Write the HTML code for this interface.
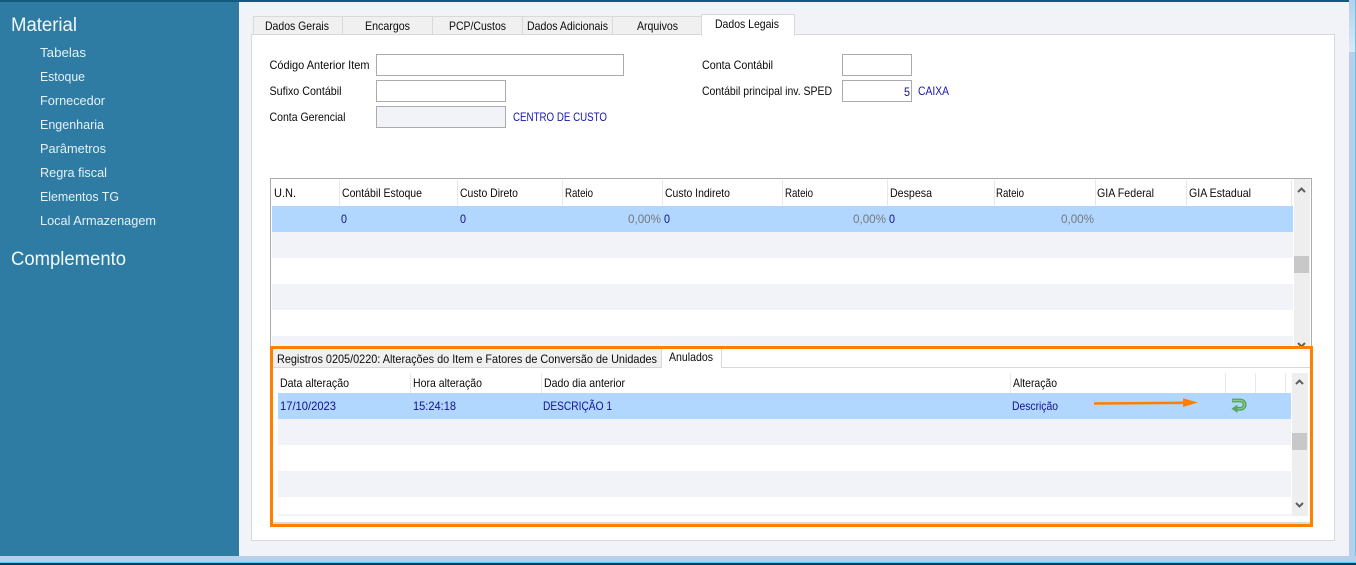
<!DOCTYPE html>
<html><head><meta charset="utf-8"><style>
html,body{margin:0;padding:0;width:1356px;height:565px;overflow:hidden;background:#f1f3f8}
svg{display:block}
text{font-family:"Liberation Sans",sans-serif;font-size:12px;fill:#0a0a0a;}
.s{fill:#e6f1f7;font-size:13px}
.h{fill:#f2f8fb;font-size:19px}
.d{fill:#10108c}
.g{fill:#777}
.l{fill:#1414b4}
</style></head><body>
<svg width="1356" height="565" viewBox="0 0 1356 565" xmlns="http://www.w3.org/2000/svg" shape-rendering="crispEdges">
<defs><linearGradient id="st" x1="0" y1="0" x2="0" y2="1"><stop offset="0" stop-color="#b7d0ea"/><stop offset="1" stop-color="#dbe8f5"/></linearGradient></defs>
<rect width="1356" height="565" fill="#f1f3f8"/>
<!-- frame -->
<rect x="1349" y="0" width="7" height="556" fill="#b7cfe9"/>
<rect x="1349" y="2" width="6" height="50" fill="url(#st)"/>
<rect x="1355" y="0" width="1" height="563" fill="#5cc8ec"/>
<rect x="0" y="556" width="1356" height="6" fill="#b7cfe9"/>
<rect x="0" y="562" width="1356" height="1" fill="#45cfe8"/>
<rect x="0" y="563" width="1356" height="2" fill="#10384a"/>
<rect x="0" y="0" width="1349" height="2" fill="#14597e"/>
<!-- sidebar -->
<rect x="0" y="2" width="239" height="554" fill="#2e7ca3"/>
<text class="h" x="11" y="31" textLength="66" lengthAdjust="spacingAndGlyphs">Material</text>
<text class="s" x="40" y="57" textLength="46" lengthAdjust="spacingAndGlyphs">Tabelas</text>
<text class="s" x="40" y="81" textLength="45" lengthAdjust="spacingAndGlyphs">Estoque</text>
<text class="s" x="40" y="105" textLength="65" lengthAdjust="spacingAndGlyphs">Fornecedor</text>
<text class="s" x="40" y="129" textLength="64" lengthAdjust="spacingAndGlyphs">Engenharia</text>
<text class="s" x="40" y="153" textLength="66" lengthAdjust="spacingAndGlyphs">Parâmetros</text>
<text class="s" x="40" y="177" textLength="67" lengthAdjust="spacingAndGlyphs">Regra fiscal</text>
<text class="s" x="40" y="201" textLength="79" lengthAdjust="spacingAndGlyphs">Elementos TG</text>
<text class="s" x="40" y="225" textLength="116" lengthAdjust="spacingAndGlyphs">Local Armazenagem</text>
<text class="h" x="11" y="265" textLength="115" lengthAdjust="spacingAndGlyphs">Complemento</text>
<!-- main panel -->
<rect x="251.500" y="34.500" width="1083" height="506" fill="#fff" stroke="#d9d9d9"/>
<!-- tabs -->
<g fill="#f0f0f0" stroke="#d9d9d9">
<rect x="253.500" y="16.500" width="89" height="18"/>
<rect x="342.500" y="16.500" width="90" height="18"/>
<rect x="432.500" y="16.500" width="90" height="18"/>
<rect x="522.500" y="16.500" width="90" height="18"/>
<rect x="612.500" y="16.500" width="89" height="18"/>
</g>
<rect x="701.500" y="14.500" width="93" height="21" fill="#fff" stroke="#d9d9d9"/>
<rect x="702" y="33" width="92" height="3" fill="#fff"/>
<text x="265" y="30" textLength="64" lengthAdjust="spacingAndGlyphs">Dados Gerais</text>
<text x="365" y="30" textLength="45" lengthAdjust="spacingAndGlyphs">Encargos</text>
<text x="449" y="30" textLength="57" lengthAdjust="spacingAndGlyphs">PCP/Custos</text>
<text x="527" y="30" textLength="81" lengthAdjust="spacingAndGlyphs">Dados Adicionais</text>
<text x="637" y="30" textLength="41" lengthAdjust="spacingAndGlyphs">Arquivos</text>
<text x="715" y="28" textLength="64" lengthAdjust="spacingAndGlyphs">Dados Legais</text>
<!-- form -->
<text x="269.500" y="69" textLength="100" lengthAdjust="spacingAndGlyphs">Código Anterior Item</text>
<text x="269.500" y="95" textLength="72" lengthAdjust="spacingAndGlyphs">Sufixo Contábil</text>
<text x="269.500" y="121" textLength="76" lengthAdjust="spacingAndGlyphs">Conta Gerencial</text>
<g stroke="#ababab">
<rect x="376.500" y="54.500" width="247" height="21" fill="#fff"/>
<rect x="376.500" y="80.500" width="129" height="21" fill="#fff"/>
<rect x="376.500" y="106.500" width="129" height="21" fill="#f1f3f8"/>
<rect x="842.500" y="54.500" width="69" height="21" fill="#fff"/>
<rect x="842.500" y="80.500" width="69" height="21" fill="#fff"/>
</g>
<text class="l" x="513" y="121" textLength="94" lengthAdjust="spacingAndGlyphs">CENTRO DE CUSTO</text>
<text x="702" y="69" textLength="71" lengthAdjust="spacingAndGlyphs">Conta Contábil</text>
<text x="702" y="95" textLength="130" lengthAdjust="spacingAndGlyphs">Contábil principal inv. SPED</text>
<text class="d" x="904" y="96" textLength="6" lengthAdjust="spacingAndGlyphs">5</text>
<text class="l" x="918" y="95" textLength="31" lengthAdjust="spacingAndGlyphs">CAIXA</text>
<!-- grid 1 -->
<rect x="270.500" y="178.500" width="1041" height="172" fill="#fff" stroke="#ababab"/>
<rect x="272" y="206" width="1021" height="26" fill="#b2d7ff"/>
<rect x="272" y="232" width="1021" height="26" fill="#f1f3f8"/>
<rect x="272" y="284" width="1021" height="26" fill="#f1f3f8"/>
<rect x="272" y="336" width="1021" height="11" fill="#f1f3f8"/>
<g fill="#e8e8e8">
<rect x="339" y="180" width="1" height="26"/><rect x="457" y="180" width="1" height="26"/>
<rect x="562" y="180" width="1" height="26"/><rect x="662" y="180" width="1" height="26"/>
<rect x="782" y="180" width="1" height="26"/><rect x="887" y="180" width="1" height="26"/>
<rect x="994" y="180" width="1" height="26"/><rect x="1095" y="180" width="1" height="26"/>
<rect x="1186" y="180" width="1" height="26"/><rect x="1291" y="180" width="1" height="26"/>
</g>
<rect x="1294" y="179" width="16" height="168" fill="#eee"/>
<rect x="1294" y="256" width="15" height="17" fill="#c8c8c8"/>
<g fill="none" stroke="#5f5f5f" stroke-width="2" shape-rendering="auto">
<path d="M1298 192l3.500-3.500 3.500 3.500"/>
<path d="M1298 343l3.500 3.500 3.500-3.500"/>
</g>
<text x="274" y="197" textLength="22" lengthAdjust="spacingAndGlyphs">U.N.</text>
<text x="342" y="197" textLength="80" lengthAdjust="spacingAndGlyphs">Contábil Estoque</text>
<text x="460" y="197" textLength="58" lengthAdjust="spacingAndGlyphs">Custo Direto</text>
<text x="565" y="197" textLength="28" lengthAdjust="spacingAndGlyphs">Rateio</text>
<text x="665" y="197" textLength="65" lengthAdjust="spacingAndGlyphs">Custo Indireto</text>
<text x="785" y="197" textLength="28" lengthAdjust="spacingAndGlyphs">Rateio</text>
<text x="890" y="197" textLength="42" lengthAdjust="spacingAndGlyphs">Despesa</text>
<text x="996" y="197" textLength="28" lengthAdjust="spacingAndGlyphs">Rateio</text>
<text x="1097" y="197" textLength="57" lengthAdjust="spacingAndGlyphs">GIA Federal</text>
<text x="1189" y="197" textLength="62" lengthAdjust="spacingAndGlyphs">GIA Estadual</text>
<text class="d" x="341" y="223" textLength="6" lengthAdjust="spacingAndGlyphs">0</text>
<text class="d" x="460" y="223" textLength="6" lengthAdjust="spacingAndGlyphs">0</text>
<text class="g" x="628" y="223" textLength="33" lengthAdjust="spacingAndGlyphs">0,00%</text>
<text class="d" x="664" y="223" textLength="6" lengthAdjust="spacingAndGlyphs">0</text>
<text class="g" x="853" y="223" textLength="33" lengthAdjust="spacingAndGlyphs">0,00%</text>
<text class="d" x="889" y="223" textLength="6" lengthAdjust="spacingAndGlyphs">0</text>
<text class="g" x="1061" y="223" textLength="33" lengthAdjust="spacingAndGlyphs">0,00%</text>
<!-- lower section -->
<rect x="273" y="349" width="1037" height="175" fill="#fff"/>
<rect x="273" y="349" width="389" height="18" fill="#f0f0f0"/>
<rect x="273" y="367" width="1037" height="1" fill="#d9d9d9"/>
<rect x="661" y="349" width="1" height="19" fill="#d9d9d9"/>
<rect x="721" y="349" width="1" height="19" fill="#d9d9d9"/>
<rect x="662" y="349" width="59" height="19" fill="#fff"/>
<rect x="273" y="522" width="1037" height="2" fill="#d9d9d9"/>
<text x="277" y="363" textLength="380" lengthAdjust="spacingAndGlyphs">Registros 0205/0220: Alterações do Item e Fatores de Conversão de Unidades</text>
<text x="669" y="361" textLength="44" lengthAdjust="spacingAndGlyphs">Anulados</text>
<!-- grid 2 -->
<rect x="278" y="393" width="1013" height="26" fill="#b2d7ff"/>
<rect x="278" y="419" width="1013" height="26" fill="#f1f3f8"/>
<rect x="278" y="471" width="1013" height="26" fill="#f1f3f8"/>
<rect x="278" y="514" width="1030" height="2" fill="#f1f3f8"/>
<g fill="#e8e8e8">
<rect x="410" y="373" width="1" height="20"/><rect x="541" y="373" width="1" height="20"/>
<rect x="1010" y="373" width="1" height="20"/><rect x="1225" y="373" width="1" height="20"/>
<rect x="1255" y="373" width="1" height="20"/><rect x="1285" y="373" width="1" height="20"/>
</g>
<rect x="1292" y="373" width="16" height="143" fill="#eee"/>
<rect x="1292" y="433" width="15" height="17" fill="#c8c8c8"/>
<g fill="none" stroke="#5f5f5f" stroke-width="2" shape-rendering="auto">
<path d="M1296 384l3.500-3.500 3.500 3.500"/>
<path d="M1296 503l3.500 3.500 3.500-3.500"/>
</g>
<text x="280" y="387" textLength="69" lengthAdjust="spacingAndGlyphs">Data alteração</text>
<text x="413" y="387" textLength="69" lengthAdjust="spacingAndGlyphs">Hora alteração</text>
<text x="544" y="387" textLength="81" lengthAdjust="spacingAndGlyphs">Dado dia anterior</text>
<text x="1013" y="387" textLength="44" lengthAdjust="spacingAndGlyphs">Alteração</text>
<text class="d" x="280" y="410" textLength="56" lengthAdjust="spacingAndGlyphs">17/10/2023</text>
<text class="d" x="413" y="410" textLength="43" lengthAdjust="spacingAndGlyphs">15:24:18</text>
<text class="d" x="543" y="410" textLength="69" lengthAdjust="spacingAndGlyphs">DESCRIÇÃO 1</text>
<text class="d" x="1012" y="410" textLength="46" lengthAdjust="spacingAndGlyphs">Descrição</text>
<!-- arrow -->
<g shape-rendering="auto">
<path d="M1094 403.500L1186 402.800" stroke="#ff8000" stroke-width="2.600" fill="none"/>
<path d="M1183 398.300L1198 402.500L1183 407Z" fill="#ff8000"/>
<path d="M1232 400.500H1240.500a4 4 0 0 1 0 8.300H1236" fill="none" stroke="#4f9f55" stroke-width="3.800"/>
<path d="M1232.500 400.500H1240.500a4 4 0 0 1 0 8.300H1236" fill="none" stroke="#86c988" stroke-width="1.400"/>
<path d="M1237.500 404.500L1231.500 408.800L1237.500 413Z" fill="#5aa860"/>
</g>
<!-- orange box -->
<rect x="271.500" y="347.500" width="1040" height="178" fill="none" stroke="#ff8000" stroke-width="3"/>
</svg>
</body></html>
